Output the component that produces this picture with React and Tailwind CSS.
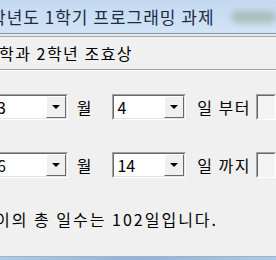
import React from 'react';

const font = { fontFamily: '"Noto Sans CJK KR", "Noto Sans", sans-serif' };

// classic win32 combobox, sunken field + raised arrow button
const Combo = ({ value, className }) => {
  return (
    <div className={`h-[26px] flex border border-t-[#a0a0a0] border-l-[#a0a0a0] border-r-white border-b-white ${className}`}>
      <div className="flex flex-1 border border-t-[#696969] border-l-[#696969] border-r-[#e3e3e3] border-b-[#e3e3e3] bg-white">
        <div className="flex-1 flex items-center pl-[3px] text-[16px] leading-none text-black">{value}</div>
        <div className="w-[20px] flex items-center justify-center bg-[#f0f0f0] border border-t-white border-l-white border-r-[#696969] border-b-[#696969]">
          <span className="w-0 h-0 border-x-[4px] border-x-transparent border-t-[4px] border-t-black"></span>
        </div>
      </div>
    </div>
  );
};

const Row = ({ month, day, tail, className }) => {
  return (
    <div className={`flex items-center h-[26px] text-[16px] leading-none text-black ${className}`}>
      <Combo value={month} className="w-[81px] ml-[-8px]" />
      <span className="ml-[9px]">월</span>
      <Combo value={day} className="w-[79px] ml-[21px]" />
      <span className="ml-[11px] whitespace-nowrap tracking-[1.5px]">일 {tail}</span>
      <div className="ml-[5px] w-[20px] h-[26px] shrink-0 border border-t-[#a0a0a0] border-l-[#a0a0a0] border-r-white border-b-white">
        <div className="w-full h-full border border-t-[#696969] border-l-[#696969] border-transparent bg-[#f4f4f4]"></div>
      </div>
    </div>
  );
};

const App = () => {
  return (
    <div className="w-[276px] h-[260px] bg-[#f0f0f0] flex flex-col overflow-hidden" style={font}>
      {/* title bar */}
      <div className="h-[33px] shrink-0 flex items-center bg-gradient-to-b from-[#c3d9f0] to-[#d3e4f6]">
        <span className="ml-[-10px] whitespace-nowrap text-[17px] tracking-[1px] leading-none text-[#1b2b44]">학년도 1학기 프로그래밍 과제</span>
        <div className="ml-[16px] w-[56px] h-[12px] rounded-full bg-[#9db8ac] blur-[3px] opacity-80"></div>
      </div>
      <div className="h-px bg-[#8b98a5]"></div>
      <div className="h-[2px] bg-[#e6eaee]"></div>
      <div className="h-px bg-[#a9a9a9]"></div>

      <div className="h-[32px] flex items-center">
        <span className="ml-[-1px] whitespace-nowrap text-[16px] tracking-[1.5px] leading-none text-black">학과 2학년 조효상</span>
      </div>
      <div className="h-px bg-[#a0a0a0]"></div>
      <div className="h-px bg-white"></div>

      <Row month="3" day="4" tail="부터" className="mt-[23px]" />
      <Row month="6" day="14" tail="까지" className="mt-[32px]" />

      <div className="mt-[33px] ml-[-5px] whitespace-nowrap text-[16px] tracking-[2px] leading-none text-black">이의 총 일수는 102일입니다.</div>

      <div className="flex-1"></div>
      <div className="h-px bg-[#a7b0bb]"></div>
      <div className="h-[3px] bg-gradient-to-r from-[#a9cbee] via-[#8fb3d9] to-[#a9cbee]"></div>
    </div>
  );
};

export default App;
